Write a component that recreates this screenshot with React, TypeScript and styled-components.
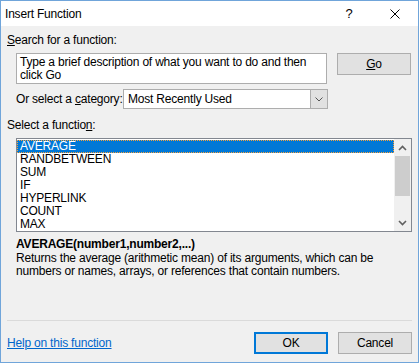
import React from 'react'
import styled, { createGlobalStyle } from 'styled-components'

const GlobalStyle = createGlobalStyle`
  html, body {
    margin: 0;
    padding: 0;
    background: #ffffff;
  }
  * {
    box-sizing: border-box;
  }
`

const uiFont = `'Liberation Sans', Arial, sans-serif`

const functions = ['AVERAGE', 'RANDBETWEEN', 'SUM', 'IF', 'HYPERLINK', 'COUNT', 'MAX']

const Window = styled.div`
  width: 419px;
  height: 363px;
  border: 1px solid #70a5da;
  display: flex;
  flex-direction: column;
  font-family: ${uiFont};
  font-size: 12px;
  letter-spacing: -0.2px;
  color: #000;
  background: #f0f0f0;
`

const TitleBar = styled.div`
  height: 25px;
  background: #fff;
  display: flex;
  align-items: center;
  padding-left: 4px;
`

const Title = styled.div`
  flex: 1;
`

const TitleButton = styled.div`
  width: 46px;
  height: 25px;
  display: flex;
  align-items: center;
  justify-content: center;
  font-size: 13px;
`

const Body = styled.div`
  flex: 1;
  display: flex;
  flex-direction: column;
  padding: 7px 6px 0 6px;
`

const Label = styled.div`
  line-height: 14px;
  height: 14px;
  white-space: nowrap;
`

const CategoryLabel = styled(Label)`
  width: 107px;
  flex-shrink: 0;
`

const SearchRow = styled.div`
  display: flex;
  gap: 10px;
  margin-top: 6px;
  padding-left: 9px;
  align-items: flex-start;
`

const SearchBox = styled.div`
  width: 311px;
  height: 31px;
  background: #fff;
  border: 1px solid #adadad;
  padding: 2px 3px;
  line-height: 13px;
`

const Button = styled.div<{ $default?: boolean }>`
  width: 74px;
  height: 22px;
  background: #e1e1e1;
  border: ${(p) => (p.$default ? '2px solid #0078d7' : '1px solid #adadad')};
  display: flex;
  align-items: center;
  justify-content: center;
`

const CategoryRow = styled.div`
  display: flex;
  align-items: center;
  margin-top: 5px;
  padding-left: 9px;
`

const Select = styled.div`
  width: 205px;
  height: 20px;
  background: #fff;
  border: 1px solid #adadad;
  display: flex;
  align-items: center;
  padding-left: 4px;
`

const SelectValue = styled.div`
  flex: 1;
`

const DropButton = styled.div`
  width: 17px;
  height: 18px;
  background: #e1e1e1;
  border-left: 1px solid #adadad;
  display: flex;
  align-items: center;
  justify-content: center;
`

const FunctionLabelWrap = styled.div`
  margin-top: 9px;
`

const ListBox = styled.div`
  margin: 6px 0 0 9px;
  width: 396px;
  height: 94px;
  border: 1px solid #828790;
  background: #fff;
  display: flex;
`

const ListItems = styled.div`
  flex: 1;
  padding-top: 1px;
`

const ListItem = styled.div<{ $selected?: boolean }>`
  height: 13px;
  line-height: 11px;
  padding-left: 2px;
  color: ${(p) => (p.$selected ? '#fff' : '#000')};
  background: ${(p) => (p.$selected ? '#0078d7' : 'transparent')};
  border: 1px ${(p) => (p.$selected ? 'dotted #f7a13a' : 'solid transparent')};
`

const ScrollBar = styled.div`
  width: 17px;
  background: #f0f0f0;
  display: flex;
  flex-direction: column;
  align-items: center;
`

const ScrollArrow = styled.div`
  height: 17px;
  width: 17px;
  display: flex;
  align-items: center;
  justify-content: center;
`

const ScrollTrack = styled.div`
  flex: 1;
  width: 100%;
  display: flex;
  flex-direction: column;
  align-items: center;
`

const ScrollThumb = styled.div`
  width: 15px;
  height: 40px;
  background: #cdcdcd;
`

const Signature = styled.div`
  margin: 5px 0 0 9px;
  font-weight: bold;
  line-height: 14px;
`

const Description = styled.div`
  margin: 1px 0 0 9px;
  line-height: 13px;
  width: 385px;
`

const Separator = styled.div`
  margin-top: auto;
  height: 1px;
  background: #dadada;
`

const Footer = styled.div`
  display: flex;
  align-items: center;
  padding: 11px 0 8px 0;
  gap: 10px;
`

const HelpLink = styled.a`
  flex: 1;
  color: #0066cc;
  text-decoration: underline;
  cursor: pointer;
`

const Chevron: React.FC<{ up?: boolean }> = ({ up }) => (
  <svg width="9" height="6" viewBox="0 0 9 6">
    <path
      d={up ? 'M1 5 L4.5 1.5 L8 5' : 'M1 1 L4.5 4.5 L8 1'}
      fill="none"
      stroke="#606060"
      strokeWidth="1.6"
    />
  </svg>
)

const CloseIcon = () => (
  <svg width="10" height="10" viewBox="0 0 10 10">
    <path d="M0.5 0.5 L9.5 9.5 M9.5 0.5 L0.5 9.5" stroke="#000" strokeWidth="1" />
  </svg>
)

export default function App() {
  return (
    <>
      <GlobalStyle />
      <Window>
        <TitleBar>
          <Title>Insert Function</Title>
          <TitleButton>?</TitleButton>
          <TitleButton>
            <CloseIcon />
          </TitleButton>
        </TitleBar>
        <Body>
          <Label>
            <u>S</u>earch for a function:
          </Label>
          <SearchRow>
            <SearchBox>
              Type a brief description of what you want to do and then click Go
            </SearchBox>
            <Button>
              <u>G</u>o
            </Button>
          </SearchRow>
          <CategoryRow>
            <CategoryLabel>
              Or select a <u>c</u>ategory:
            </CategoryLabel>
            <Select>
              <SelectValue>Most Recently Used</SelectValue>
              <DropButton>
                <svg width="8" height="5" viewBox="0 0 8 5">
                  <path d="M0.5 0.5 L4 4 L7.5 0.5" fill="none" stroke="#555" strokeWidth="1" />
                </svg>
              </DropButton>
            </Select>
          </CategoryRow>
          <FunctionLabelWrap>
            <Label>
              Select a functio<u>n</u>:
            </Label>
          </FunctionLabelWrap>
          <ListBox>
            <ListItems>
              {functions.map((fn, i) => (
                <ListItem key={fn} $selected={i === 0}>
                  {fn}
                </ListItem>
              ))}
            </ListItems>
            <ScrollBar>
              <ScrollArrow>
                <Chevron up />
              </ScrollArrow>
              <ScrollTrack>
                <ScrollThumb />
              </ScrollTrack>
              <ScrollArrow>
                <Chevron />
              </ScrollArrow>
            </ScrollBar>
          </ListBox>
          <Signature>AVERAGE(number1,number2,...)</Signature>
          <Description>
            Returns the average (arithmetic mean) of its arguments, which can be numbers or
            names, arrays, or references that contain numbers.
          </Description>
          <Separator />
          <Footer>
            <HelpLink>Help on this function</HelpLink>
            <Button $default>OK</Button>
            <Button>Cancel</Button>
          </Footer>
        </Body>
      </Window>
    </>
  )
}
